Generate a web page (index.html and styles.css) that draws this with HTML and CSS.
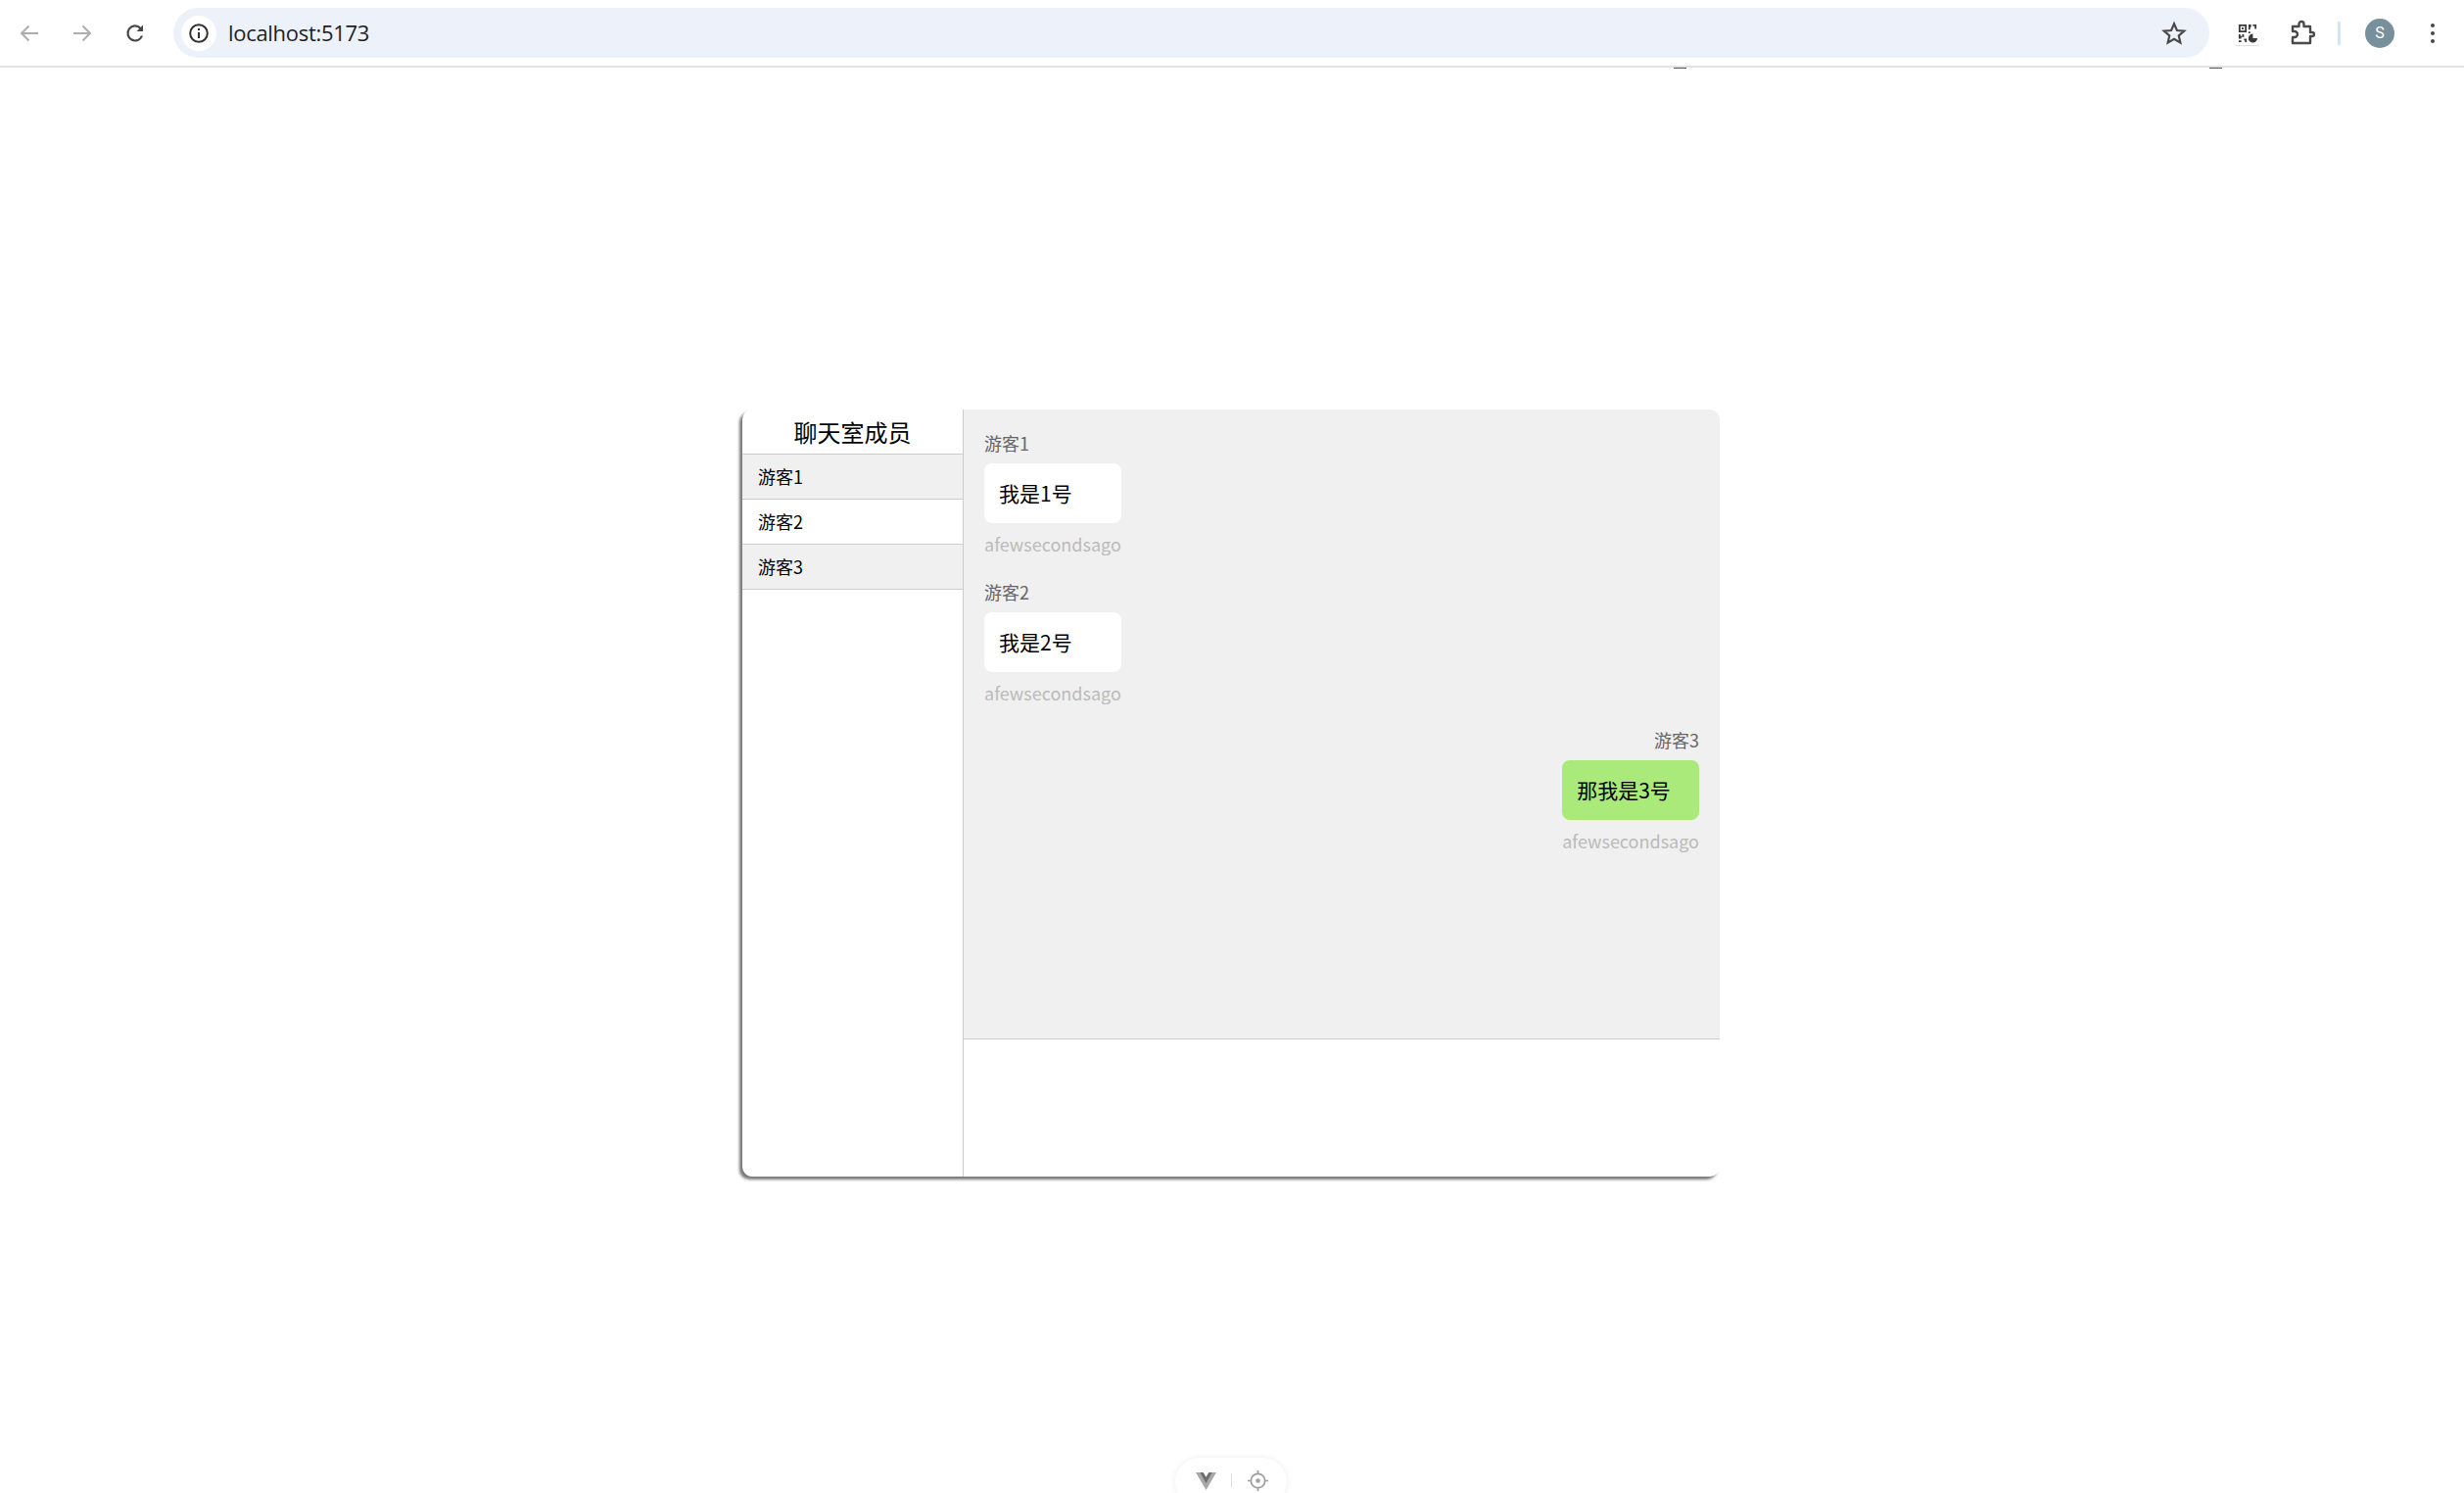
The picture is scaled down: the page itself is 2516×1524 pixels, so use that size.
FILE: index.html
```html
<!DOCTYPE html>
<html lang="zh-CN">
<head>
<meta charset="utf-8">
<title>localhost:5173</title>
<link rel="stylesheet" href="styles.css">
</head>
<body>
<header class="toolbar">
  <button class="nav-btn"><svg width="24" height="24" viewBox="0 0 24 24" fill="none" stroke="#adadad" stroke-width="2"><path d="M21 12H4M11.5 4.500 4 12l7.500 7.500"/></svg></button>
  <button class="nav-btn"><svg width="24" height="24" viewBox="0 0 24 24" fill="none" stroke="#adadad" stroke-width="2"><path d="M3 12h17M12.500 4.500 20 12l-7.500 7.500"/></svg></button>
  <button class="nav-btn"><svg width="24" height="24" viewBox="0 0 24 24" fill="none" stroke="#474747" stroke-width="2.200"><path d="M19 14.500A7.500 7.500 0 1 1 17.300 6.700L19.500 9"/><path d="M20 3.500V10h-6.500z" fill="#474747" stroke="none"/></svg></button>
  <div class="urlbar">
    <span class="info-chip"><svg width="24" height="24" viewBox="0 0 24 24" fill="none" stroke="#303030" stroke-width="2"><circle cx="12" cy="12" r="8.800"/><path d="M12 11v6M12 7v2"/></svg></span>
    <span class="url">localhost:5173</span>
    <svg class="star" width="26" height="26" viewBox="0 0 24 24" fill="none" stroke="#474747" stroke-width="2"><path d="m12 3 2.700 6.200 6.800.6-5.100 4.500 1.500 6.600L12 17.400l-5.900 3.500 1.500-6.600-5.100-4.500 6.800-.6z"/></svg>
  </div>
  <span class="ext-btn first-ext"><span class="qr"><svg width="20" height="20" viewBox="0 0 22 22" fill="#3a3a3a"><path fill-rule="evenodd" d="M1 1h9v9H1zm2 2v5h5V3zm1.500 1.500h2v2h-2zM12 1h3v3h-1v3h-2zM17 1h4v5h-2V3h-2zM1 12h2v2h2v-2h2v3H4v2H1zM7 17h3v4H8v-2H7zM1 19h3v2H1zM12 9h2v2h-2zM12 17h2v2h-2z"/><path d="M17 11.500v5h5a5 5 0 1 1-5-5z"/></svg></span></span>
  <span class="ext-btn"><svg width="28" height="28" viewBox="0 0 28 28" fill="none" stroke="#4a4a4a" stroke-width="2.400" stroke-linejoin="round"><path d="M5 7h6.500V4.500a2 2 0 0 1 5 0V7H23v6h2a2 2 0 0 1 0 4h-2v7H5v-6h2a3 3 0 0 0 0-6H5z"/></svg></span>
  <span class="divider"></span>
  <span class="avatar">S</span>
  <span class="menu"><i></i><i></i><i></i></span>
</header>

<i class="tick tick-a"></i>
<i class="tick tick-b"></i>

<main class="page">
  <section class="chat-room">
    <aside class="members">
      <h2 class="members-title">聊天室成员</h2>
      <ul class="member-list">
        <li class="member">游客1</li>
        <li class="member">游客2</li>
        <li class="member">游客3</li>
      </ul>
    </aside>
    <div class="conversation">
      <div class="messages">
        <article class="msg">
          <div class="msg-name">游客1</div>
          <div class="bubble">我是1号</div>
          <div class="msg-time">afewsecondsago</div>
        </article>
        <article class="msg">
          <div class="msg-name">游客2</div>
          <div class="bubble">我是2号</div>
          <div class="msg-time">afewsecondsago</div>
        </article>
        <article class="msg mine">
          <div class="msg-name">游客3</div>
          <div class="bubble">那我是3号</div>
          <div class="msg-time">afewsecondsago</div>
        </article>
      </div>
      <div class="composer"></div>
    </div>
  </section>
</main>

<div class="devtools">
  <svg width="21" height="19" viewBox="0 0 22 20"><path d="M0 1h5l6 10L17 1h5L11 20z" fill="#a8a8a8"/><path d="M4.500 1H8l3 5 3-5h3.500L11 12.500z" fill="#6e6e6e"/></svg>
  <span class="devtools-sep"></span>
  <svg width="23" height="23" viewBox="0 0 24 24" fill="none" stroke="#a0a0a0" stroke-width="1.800"><circle cx="12" cy="12" r="7.500"/><circle cx="12" cy="12" r="1.500" fill="#a0a0a0"/><path d="M12 1v4M12 19v4M1 12h4M19 12h4"/></svg>
</div>
</body>
</html>
```
FILE: styles.css
```css
* { box-sizing: border-box; }
html, body { margin: 0; height: 100%; }
body {
  position: relative;
  height: 1524px;
  overflow: hidden;
  background: #fff;
  font-family: "Noto Sans CJK SC", "Noto Sans", sans-serif;
}

/* browser chrome */
.toolbar {
  display: flex;
  align-items: center;
  height: 69px;
  padding-left: 3px;
  background: #fff;
  border-bottom: 2px solid #e3e3e3;
}
.nav-btn {
  display: flex;
  align-items: center;
  justify-content: center;
  width: 54px;
  height: 54px;
  padding: 0;
  border: 0;
  background: none;
}
.urlbar {
  display: flex;
  align-items: center;
  width: 2079px;
  height: 51px;
  margin-left: 12px;
  padding-left: 8px;
  padding-right: 23px;
  border-radius: 26px;
  background: #ecf1fa;
}
.info-chip {
  display: flex;
  align-items: center;
  justify-content: center;
  width: 36px;
  height: 36px;
  border-radius: 50%;
  background: #fff;
}
.url {
  margin-left: 12px;
  padding-bottom: 2px;
  font-family: "Open Sans", "Noto Sans", sans-serif;
  font-size: 22px;
  color: #1f1f1f;
  letter-spacing: -0.3px;
}
.star { margin-left: auto; }
.ext-btn {
  display: flex;
  align-items: center;
  justify-content: center;
  width: 55px;
  height: 54px;
}
.first-ext { margin-left: 11px; }
.qr {
  display: flex;
  align-items: center;
  justify-content: center;
  width: 25px;
  height: 25px;
  border-radius: 2px;
  background: #fff;
  box-shadow: 0 1px 1px #ddd;
}
.divider {
  width: 3px;
  height: 24px;
  margin-left: 10px;
  background: #d3e3fd;
}
.avatar {
  display: flex;
  align-items: center;
  justify-content: center;
  width: 30px;
  height: 30px;
  margin-left: 25px;
  border-radius: 50%;
  background: #78909c;
  color: #fff;
  font-family: "Roboto", sans-serif;
  font-size: 16px;
}
.menu {
  display: flex;
  flex-direction: column;
  gap: 4px;
  margin-left: 37px;
}
.menu i {
  width: 4px;
  height: 4px;
  border-radius: 50%;
  background: #474747;
}
.tick {
  position: absolute;
  top: 69px;
  height: 1px;
  background: #555;
}
.tick-a { left: 1709px; width: 13px; }
.tick-b { left: 2256px; width: 13px; }

/* page */
.page { padding: 349px 2px 0 0; }
.chat-room {
  display: flex;
  width: 998px;
  height: 783px;
  margin: 0 auto;
  border-radius: 10px;
  background: #fff;
  box-shadow: -3px 3px 3px #777;
}
.members {
  flex: none;
  width: 226px;
  border-right: 1px solid #ccc;
}
.members-title {
  height: 45px;
  margin: 0;
  font-size: 24px;
  font-weight: 400;
  line-height: 45px;
  text-align: center;
  color: #000;
}
.member-list {
  margin: 0;
  padding: 0;
  list-style: none;
  border-top: 1px solid #ccc;
}
.member {
  height: 46px;
  padding-left: 16px;
  border-bottom: 1px solid #ccc;
  font-size: 18px;
  line-height: 45px;
  color: #000;
}
.member:nth-child(odd) { background: #f0f0f0; }

.conversation {
  display: flex;
  flex: 1;
  flex-direction: column;
  min-width: 0;
}
.messages {
  display: flex;
  flex-direction: column;
  gap: 19.500px;
  height: 643px;
  padding: 20px 21px 0;
  background: #f0f0f0;
  border-top-right-radius: 10px;
  border-bottom: 1px solid #ccc;
}
.msg {
  display: flex;
  flex-direction: column;
  width: fit-content;
}
.mine { margin-left: auto; }
.msg-name {
  height: 27px;
  font-size: 18px;
  line-height: 29px;
  color: #666;
}
.mine .msg-name { text-align: right; }
.bubble {
  height: 61px;
  margin-top: 8px;
  padding: 0 15px;
  border-radius: 8px;
  background: #fff;
  font-size: 21px;
  line-height: 61px;
  color: #000;
}
.mine .bubble { background: #a9ea7a; }
.msg-time {
  height: 28px;
  margin-top: 8px;
  font-size: 18px;
  line-height: 26px;
  color: #bbb;
}
.composer { flex: 1; }

/* vite devtools launcher */
.devtools {
  position: absolute;
  left: 1200px;
  bottom: -14px;
  display: flex;
  align-items: center;
  gap: 15px;
  height: 50px;
  padding: 0 18px 4px 21px;
  border-radius: 25px;
  background: #fff;
  box-shadow: 0 0 6px rgba(0, 0, 0, 0.08);
}
.devtools-sep {
  width: 1px;
  height: 14px;
  background: #ddd;
}
```
